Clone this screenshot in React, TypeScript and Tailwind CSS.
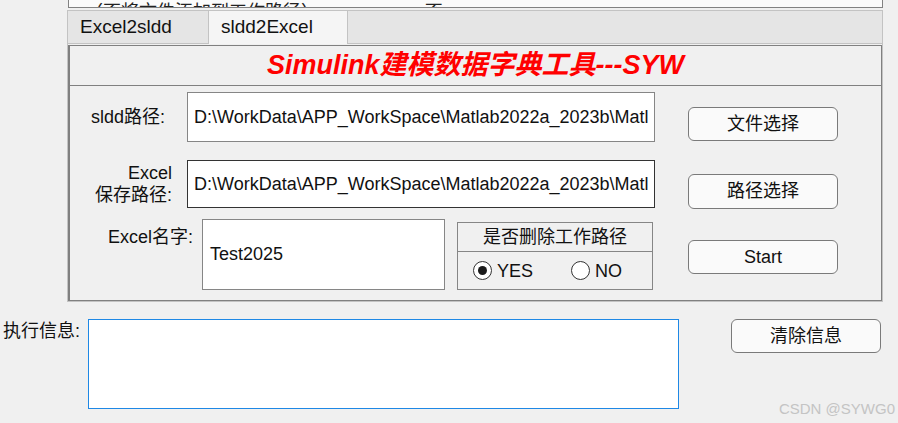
import React from "react";

const font = { fontFamily: '"Liberation Sans", "Noto Sans CJK SC", sans-serif' };

function Radio({ checked, label }: { checked?: boolean; label: string }) {
  return (
    <div className="flex items-center gap-[5px]">
      <span className="w-[19px] h-[19px] rounded-full border border-[#333] bg-white flex items-center justify-center">
        {checked && <span className="w-[9px] h-[9px] rounded-full bg-[#1a1a1a]" />}
      </span>
      <span className="text-[18px] leading-none text-[#111]">{label}</span>
    </div>
  );
}

function Btn({ children, className = "" }: { children: React.ReactNode; className?: string }) {
  return (
    <button
      className={`w-[150px] h-[34px] rounded-[6px] border border-[#7a7a7a] bg-[#fafafa] text-[18px] text-[#111] flex items-center justify-center ${className}`}
    >
      {children}
    </button>
  );
}

export default function App() {
  const path = "D:\\WorkData\\APP_WorkSpace\\Matlab2022a_2023b\\Matl";

  return (
    <div className="w-[898px] h-[423px] bg-[#f0f0f0] relative overflow-hidden text-[#111]" style={font}>
      {/* clipped panel above, only the bottom of its text shows */}
      <div className="ml-[68px] w-[815px] h-[8px] bg-[#fbfbfb] border-x border-b border-[#828282] overflow-hidden flex items-end">
        <span className="ml-[16px] text-[18px] leading-[18px] mb-[-14px] text-[#222] whitespace-nowrap">
          （否将文件添加到工作路径）
        </span>
        <span className="ml-[90px] text-[18px] leading-[18px] mb-[-14px] text-[#222] whitespace-nowrap">
          ○ 否
        </span>
      </div>

      {/* tab group */}
      <div className="mt-[2px] ml-[67px] w-[816px]">
        <div className="h-[34px] flex bg-[#e5e5e5] border-t border-x border-b border-[#c3c3c3]">
          <div className="w-[140px] flex items-center pl-[12px] text-[19px]">Excel2sldd</div>
          <div className="w-[140px] flex items-center pl-[12px] text-[19px] bg-[#f5f5f5] border-x border-[#c3c3c3] -mb-px">
            sldd2Excel
          </div>
        </div>

        <div className="border-x border-b border-[#c3c3c3] pt-[1px]">
          <div className="h-[256px] border-2 border-[#808080] border-r-[1px] border-t-[1px] border-b-[1px]">
            {/* title */}
            <div className="h-[40px] border-b border-[#808080] flex items-center justify-center">
              <span className="text-[27px] font-bold italic text-[#ff0000] leading-none">
                Simulink建模数据字典工具---SYW
              </span>
            </div>

            {/* row 1 */}
            <div className="flex items-start mt-[6px]">
              <div className="w-[117px] h-[50px] flex items-center justify-end pr-[22px] text-[18px]">sldd路径:</div>
              <div className="w-[468px] h-[50px] bg-white border border-[#868686] flex items-center pl-[6px] text-[18px] whitespace-nowrap overflow-hidden">
                {path}
              </div>
              <Btn className="ml-[33px] mt-[15px]">文件选择</Btn>
            </div>

            {/* row 2 */}
            <div className="flex items-start mt-[18px]">
              <div className="w-[117px] h-[48px] flex flex-col items-end justify-center pr-[15px] text-[18px] leading-[22px] text-right">
                <span>Excel</span>
                <span>保存路径:</span>
              </div>
              <div className="w-[468px] h-[48px] bg-white border border-[#333] flex items-center pl-[6px] text-[18px] whitespace-nowrap overflow-hidden">
                {path}
              </div>
              <Btn className="ml-[33px] mt-[14px] h-[35px]">路径选择</Btn>
            </div>

            {/* row 3 */}
            <div className="flex items-start mt-[10px]">
              <div className="w-[132px] flex justify-end pr-[9px] pt-[7px] text-[18px] leading-[22px]">Excel名字:</div>
              <div className="w-[243px] h-[71px] bg-white border border-[#868686] flex items-center pl-[7px] text-[18px]">
                Test2025
              </div>
              <div className="ml-[12px] mt-[3px] w-[196px] h-[68px] border border-[#868686] flex flex-col">
                <div className="h-[29px] border-b border-[#868686] flex items-center justify-center text-[18px]">
                  是否删除工作路径
                </div>
                <div className="flex-1 flex items-center pl-[15px] gap-[38px]">
                  <Radio checked label="YES" />
                  <Radio label="NO" />
                </div>
              </div>
              <Btn className="ml-[35px] mt-[21px]">Start</Btn>
            </div>
          </div>
        </div>
      </div>

      {/* message row */}
      <div className="flex items-start mt-[17px]">
        <div className="w-[88px] pl-[3px] pt-[1px] text-[18px] leading-[22px]">执行信息:</div>
        <div className="w-[591px] h-[90px] bg-white border border-[#1e88e5]" />
        <Btn className="ml-[52px]">清除信息</Btn>
      </div>

      <div className="absolute right-[3px] bottom-[7px] text-[15px] text-[#c4c4c4] leading-none">CSDN @SYWG0</div>
    </div>
  );
}
